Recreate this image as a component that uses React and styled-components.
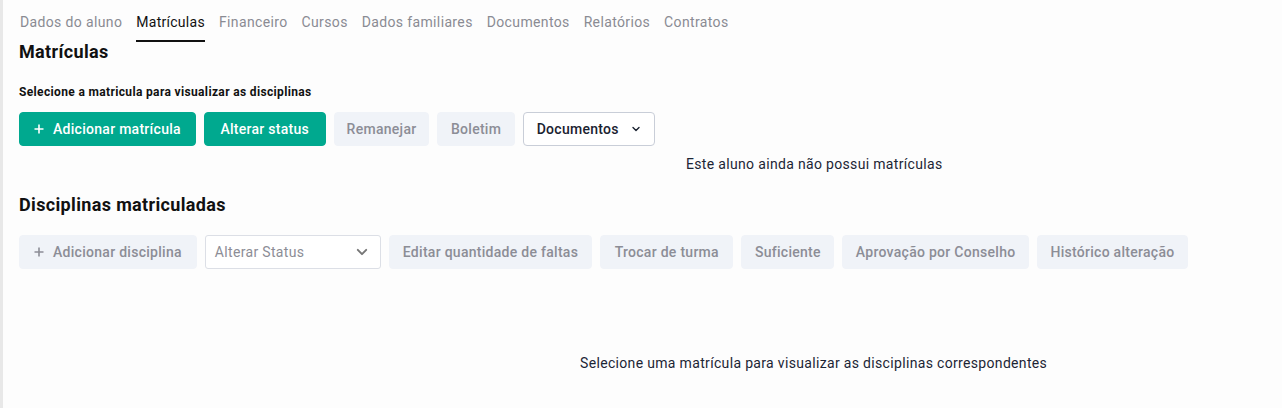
import React from 'react';
import styled, { createGlobalStyle } from 'styled-components';

const GlobalStyle = createGlobalStyle`
  html, body {
    margin: 0;
    padding: 0;
    background: #fdfdfd;
    font-family: Roboto, "Liberation Sans", sans-serif;
    letter-spacing: 0.33px;
  }
`;

const Page = styled.div`
  display: flex;
  min-height: 408px;
`;

const SideStrip = styled.div`
  width: 3px;
  flex-shrink: 0;
  background: #e8e8e8;
`;

const Main = styled.div`
  flex: 1;
  padding: 12px 0 0 16px;
`;

const Tabs = styled.nav`
  display: flex;
  gap: 14px;
  padding-left: 1px;
`;

const Tab = styled.div`
  padding: 0 0 8px;
  font-size: 14px;
  line-height: 20px;
  letter-spacing: ${p => (p.$active ? '0.28px' : '0.36px')};
  color: ${p => (p.$active ? '#111' : '#8a8b93')};
  border-bottom: 2px solid ${p => (p.$active ? '#111' : 'transparent')};
`;

const Title = styled.h2`
  margin: ${p => p.$top || 0} 0 0;
  font-size: 18px;
  line-height: 20px;
  font-weight: 700;
  letter-spacing: 0.35px;
  color: #111;
`;

const Subtitle = styled.div`
  margin-top: 22px;
  font-size: 12px;
  line-height: 16px;
  font-weight: 700;
  letter-spacing: 0.35px;
  color: #111;
`;

const Row = styled.div`
  display: flex;
  gap: 8px;
  margin-top: ${p => p.$top};
`;

const Button = styled.button`
  display: flex;
  align-items: center;
  flex-shrink: 0;
  gap: ${p => p.$gap || '9px'};
  height: 34px;
  padding: 0 ${p => p.$pad || '12.5px'};
  border-radius: 4px;
  font-family: inherit;
  font-size: 14px;
  font-weight: 500;
  letter-spacing: 0.28px;
  border: 1px solid ${p => (p.$variant === 'primary' ? '#00a98f' : p.$variant === 'outline' ? '#c9ced8' : '#f0f3f8')};
  background: ${p => (p.$variant === 'primary' ? '#00a98f' : p.$variant === 'outline' ? '#fff' : '#f0f3f8')};
  color: ${p => (p.$variant === 'primary' ? '#fff' : p.$variant === 'outline' ? '#1a2230' : '#8c8d96')};
`;

const Select = styled.div`
  display: flex;
  align-items: center;
  justify-content: space-between;
  flex-shrink: 0;
  box-sizing: border-box;
  width: 176px;
  height: 34px;
  padding: 0 11px 0 9px;
  border: 1px solid #dcdfe6;
  border-radius: 3px;
  background: #fff;
  font-size: 14px;
  color: #8c8d96;
`;

const Message = styled.div`
  margin: ${p => p.$top} 0 0 ${p => p.$left};
  font-size: 14px;
  line-height: 20px;
  color: #1c2535;
`;

const Plus = ({ color }) => (
  <svg width="10" height="10" viewBox="0 0 10 10" fill="none">
    <path d="M5 0.5v9M0.5 5h9" stroke={color} strokeWidth="1.6" />
  </svg>
);

const Chevron = ({ size = 10, color = '#555' }) => (
  <svg width={size} height={size} viewBox="0 0 10 10" fill="none">
    <path d="M2 3.5l3 3 3-3" stroke={color} strokeWidth="1.4" strokeLinecap="round" strokeLinejoin="round" />
  </svg>
);

const tabs = ['Dados do aluno', 'Matrículas', 'Financeiro', 'Cursos', 'Dados familiares', 'Documentos', 'Relatórios', 'Contratos'];

export default function App() {
  return (
    <>
      <GlobalStyle />
      <Page>
        <SideStrip />
        <Main>
          <Tabs>
            {tabs.map(t => (
              <Tab key={t} $active={t === 'Matrículas'}>{t}</Tab>
            ))}
          </Tabs>

          <Title>Matrículas</Title>
          <Subtitle>Selecione a matricula para visualizar as disciplinas</Subtitle>

          <Row $top="12px">
            <Button $variant="primary" $pad="14px"><Plus color="#fff" />Adicionar matrícula</Button>
            <Button $variant="primary" $pad="15.5px">Alterar status</Button>
            <Button $pad="12px">Remanejar</Button>
            <Button $pad="12.5px">Boletim</Button>
            <Button $variant="outline" $gap="12px" $pad="13px">
              Documentos <Chevron size={10} color="#1a2230" />
            </Button>
          </Row>

          <Message $top="8px" $left="667px">Este aluno ainda não possui matrículas</Message>

          <Title $top="21px">Disciplinas matriculadas</Title>

          <Row $top="20px">
            <Button $pad="14px"><Plus color="#8c8d96" />Adicionar disciplina</Button>
            <Select>
              Alterar Status
              <Chevron size={14} color="#777" />
            </Select>
            <Button $pad="13px">Editar quantidade de faltas</Button>
            <Button $pad="13.5px">Trocar de turma</Button>
            <Button>Suficiente</Button>
            <Button>Aprovação por Conselho</Button>
            <Button>Histórico alteração</Button>
          </Row>

          <Message $top="84px" $left="561px">Selecione uma matrícula para visualizar as disciplinas correspondentes</Message>
        </Main>
      </Page>
    </>
  );
}
